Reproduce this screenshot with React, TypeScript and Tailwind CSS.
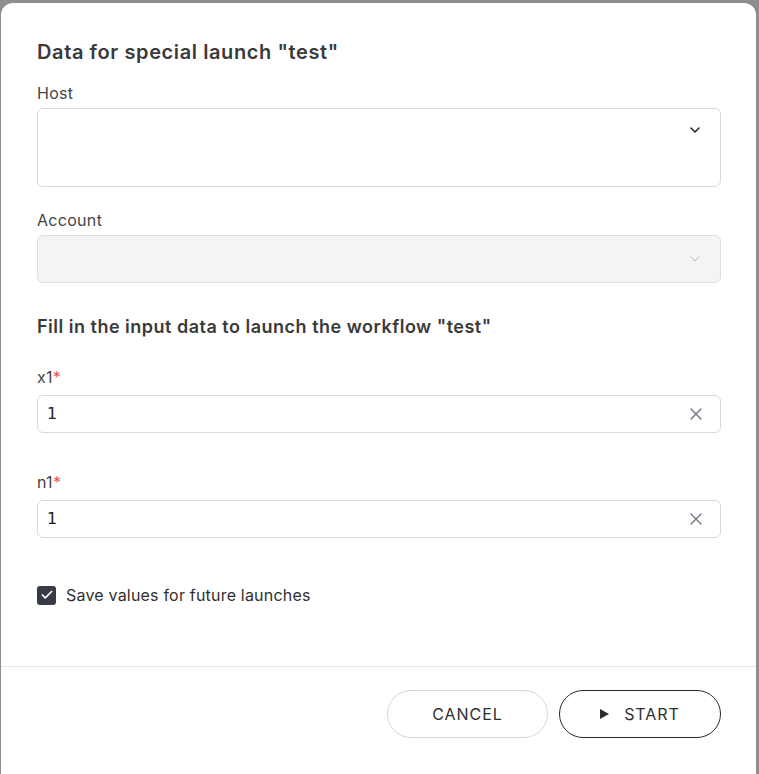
import { ChevronDown, X, Check } from 'lucide-react';

function Label({ text, required }: { text: string; required?: boolean }) {
  return (
    <div className="text-[16px] leading-6 tracking-[0.3px] text-[#454545]">
      {text}
      {required && <span className="text-[#f05252]">*</span>}
    </div>
  );
}

function TextField({ value }: { value: string }) {
  return (
    <div className="mt-[6px] flex h-[38px] items-center rounded-[6px] border border-[#d6d9e4] bg-white pl-[9px] pr-[14px]">
      <span className="flex-1 text-[16px] text-[#222] [font-family:'DejaVu_Sans',sans-serif]">{value}</span>
      <X size={20} strokeWidth={1.6} className="text-[#6b7280]" />
    </div>
  );
}

export default function App() {
  return (
    <div className="h-[774px] overflow-hidden bg-[#8e8e8e] pl-px pt-[3px] [font-family:Inter,'Noto_Sans',sans-serif]">
      <div className="flex h-[800px] w-[755px] flex-col rounded-t-[12px] bg-white">
        <div className="pl-[36px] pr-[35px] pt-[35px]">
          <h2 className="text-[20px] leading-7 font-semibold tracking-[0.6px] text-[#3a3a3a]">
            Data for special launch "test"
          </h2>

          <div className="mt-[15px]">
            <Label text="Host" />
            <div className="mt-[3px] flex h-[79px] items-start justify-end rounded-[6px] border border-[#d6d9e4] bg-white pr-[17px] pt-[13px]">
              <ChevronDown size={16} strokeWidth={2.25} className="text-[#222]" />
            </div>
          </div>

          <div className="mt-[21px]">
            <Label text="Account" />
            <div className="mt-[3px] flex h-[48px] items-center justify-end rounded-[6px] border border-[#dedede] bg-[#f4f4f4] pr-[17px]">
              <ChevronDown size={16} strokeWidth={1.5} className="text-[#b8b8b8]" />
            </div>
          </div>

          <h3 className="mt-[32px] text-[18px] leading-6 font-semibold tracking-[0.5px] text-[#3a3a3a]">
            Fill in the input data to launch the workflow "test"
          </h3>

          <div className="mt-[26px]">
            <Label text="x1" required />
            <TextField value="1" />
          </div>

          <div className="mt-[37px]">
            <Label text="n1" required />
            <TextField value="1" />
          </div>

          <label className="mt-[45px] flex items-center gap-[10px]">
            <span className="flex h-[19px] w-[19px] items-center justify-center rounded-[3px] bg-[#363b47]">
              <Check size={14} strokeWidth={3} className="text-white" />
            </span>
            <span className="text-[16px] tracking-[0.2px] text-[#2f2f2f]">Save values for future launches</span>
          </label>
        </div>

        <div className="mt-[59px] border-t border-[#e6e6f0]" />

        <div className="flex justify-end gap-[11px] pl-[36px] pr-[35px] pt-[23px]">
          <button className="h-[48px] w-[161px] rounded-full border border-[#d3d8e4] bg-white text-[16px] tracking-[0.06em] text-[#2f2f2f]">
            CANCEL
          </button>
          <button className="flex h-[48px] w-[162px] items-center justify-center gap-[15px] rounded-full border border-[#2b2b2b] bg-white text-[16px] tracking-[0.06em] text-[#2f2f2f]">
            <svg width="9" height="10" viewBox="0 0 9 10" className="fill-[#2b2b2b]">
              <path d="M0 0 L9 5 L0 10 Z" />
            </svg>
            START
          </button>
        </div>
      </div>
    </div>
  );
}
